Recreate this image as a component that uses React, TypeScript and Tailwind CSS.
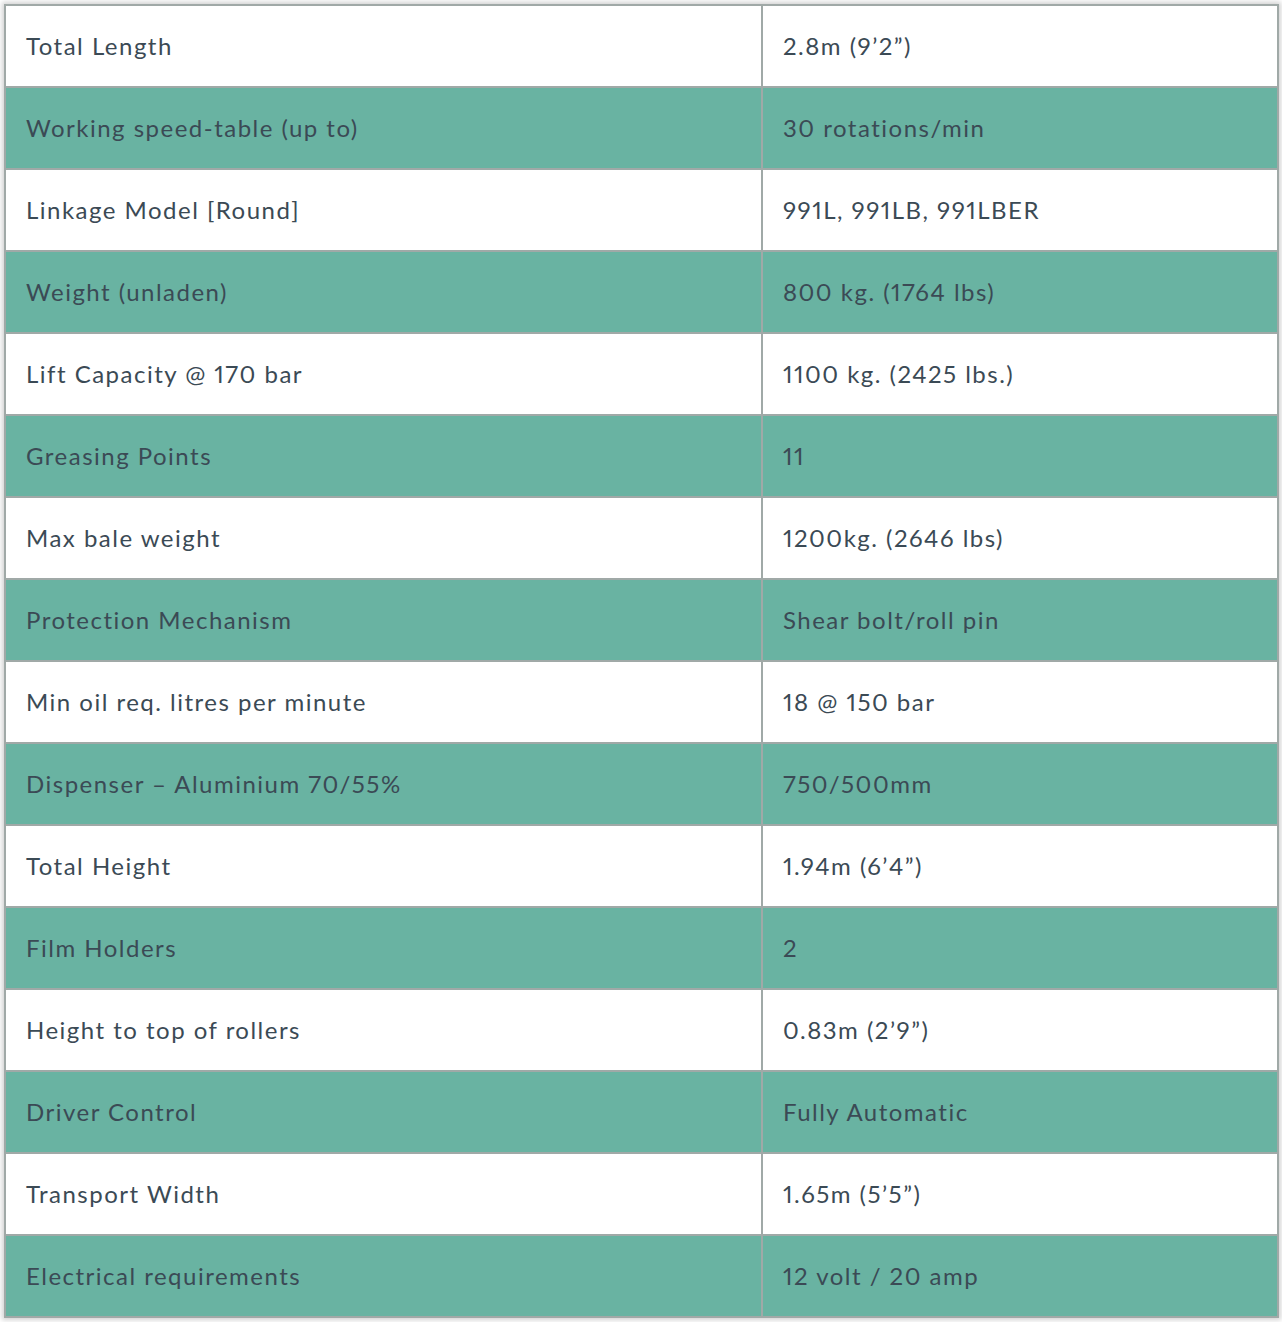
import React from "react";

interface Spec {
  label: string;
  value: string;
}

const specs: Spec[] = [
  { label: "Total Length", value: "2.8m (9’2”)" },
  { label: "Working speed-table (up to)", value: "30 rotations/min" },
  { label: "Linkage Model [Round]", value: "991L, 991LB, 991LBER" },
  { label: "Weight (unladen)", value: "800 kg. (1764 lbs)" },
  { label: "Lift Capacity @ 170 bar", value: "1100 kg. (2425 lbs.)" },
  { label: "Greasing Points", value: "11" },
  { label: "Max bale weight", value: "1200kg. (2646 lbs)" },
  { label: "Protection Mechanism", value: "Shear bolt/roll pin" },
  { label: "Min oil req. litres per minute", value: "18 @ 150 bar" },
  { label: "Dispenser – Aluminium 70/55%", value: "750/500mm" },
  { label: "Total Height", value: "1.94m (6’4”)" },
  { label: "Film Holders", value: "2" },
  { label: "Height to top of rollers", value: "0.83m (2’9”)" },
  { label: "Driver Control", value: "Fully Automatic" },
  { label: "Transport Width", value: "1.65m (5’5”)" },
  { label: "Electrical requirements", value: "12 volt / 20 amp" },
];

const App: React.FC = () => {
  return (
    <div className="min-h-screen bg-white pt-[4px] pl-[4px]">
      <div className="w-[1275px] shadow-[0_0_5px_2px_rgba(0,0,0,0.18)]">
        <table
          className="w-full table-fixed border-collapse text-[24px] text-[#3b4a55] tracking-[0.062em] proportional-nums"
          style={{ fontFamily: "Lato, 'Open Sans', sans-serif" }}
        >
          <colgroup>
            <col className="w-[757px]" />
            <col />
          </colgroup>
          <tbody>
            {specs.map((s, i) => (
              <tr
                key={s.label}
                className={i % 2 === 1 ? "bg-[#69b3a2]" : "bg-white"}
              >
                <td className="h-[82px] border-2 border-[#a0a9a7] pl-[20px] pr-4 align-middle">
                  {s.label}
                </td>
                <td className="h-[82px] border-2 border-[#a0a9a7] pl-[20px] pr-4 align-middle">
                  {s.value}
                </td>
              </tr>
            ))}
          </tbody>
        </table>
      </div>
    </div>
  );
};

export default App;
